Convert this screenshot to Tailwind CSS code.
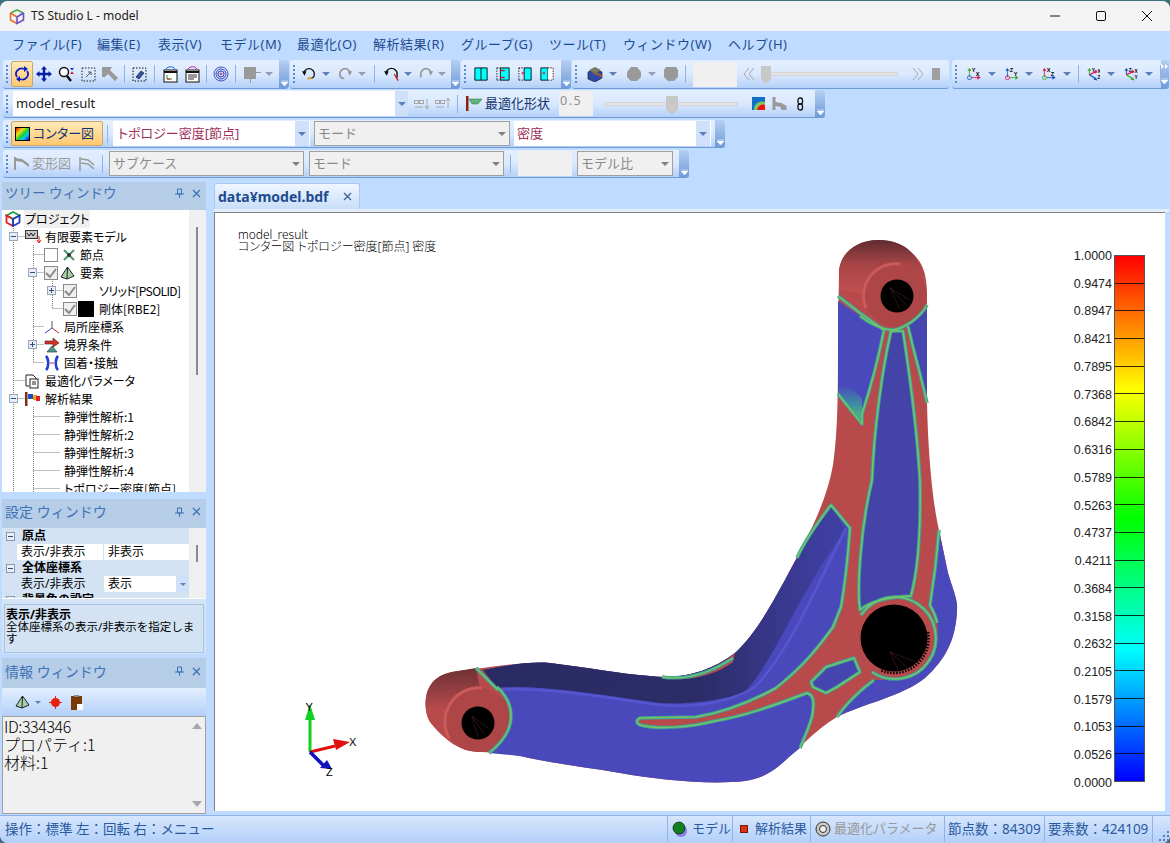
<!DOCTYPE html>
<html lang="ja">

<head>
    <meta charset="UTF-8">
    <title>TS Studio L - model</title>
    <script src="https://cdn.jsdelivr.net/npm/@tailwindcss/browser@4"></script>
</head>

<body class="bg-[#3d6f7b] overflow-hidden">
    <svg width="0" height="0" class="absolute">
        <defs>
            <symbol id="face" viewBox="0 0 16 16">
                <path d="M1 1H15V15H1z" fill="#00ffff" stroke="black" />
                <path d="M8 1V15" stroke="black" />
            </symbol>
            <linearGradient id="cap-top" x1="0" y1="0" x2="0" y2="1">
                <stop offset="0" stop-color="#5f2c30" />
                <stop offset="0.45" stop-color="#a84547" />
                <stop offset="1" stop-color="#c45053" />
            </linearGradient>
            <linearGradient id="cap-low" x1="0" y1="0" x2="0" y2="1">
                <stop offset="0" stop-color="#6d3134" />
                <stop offset="0.5" stop-color="#b84a4c" />
                <stop offset="1" stop-color="#b84a4c" />
            </linearGradient>
            <linearGradient id="flange" x1="0" y1="0" x2="1" y2="0">
                <stop offset="0" stop-color="#2a2a64" />
                <stop offset="0.6" stop-color="#2c2c68" />
                <stop offset="0.85" stop-color="#3a3a92" />
                <stop offset="1" stop-color="#4040a8" />
            </linearGradient>
            <linearGradient id="fade" x1="0" y1="0" x2="0" y2="1">
                <stop offset="0.2" stop-color="#4949bb" />
                <stop offset="0.6" stop-color="#3d8fa0" />
                <stop offset="0.9" stop-color="#58bd78" />
            </linearGradient>
            <!-- density borders, only where red meets blue -->
            <g id="edges" fill="none" stroke-linejoin="round">
                <path d="M797 558C805 540 818 522 831 505L850 528C848 555 844 590 841 607L833 627C820 645 805 665 776 688C745 705 720 713 696 717L640 718C636 720 636 723 640 725C660 730 690 727 715 721C745 716 775 705 807 693C815 695 814 705 812 717C808 730 804 738 800 748" />
                <path d="M811 682L826 667L854 658L860 672L837 687L826 693L813 687Z" />
                <path d="M837 717C845 705 860 690 874 680" />
                <path d="M937 623C936 615 932 610 930 605C934 580 937 555 939 530" />
                <path d="M891 331L903 331C909 370 917 430 920 480C921 530 918 570 911 596C890 597 872 600 860 610C857 590 860 530 872 480C874 430 882 370 891 331Z" />
                <path d="M927 403C922 380 912 345 908 326" />
                <path d="M884 330C878 360 870 390 862 414L862 424L838 394" />
                <path d="M838 296L860 313L884 330" />
                <path d="M662 677C690 681 715 670 733 658" />
                <path d="M476 668L498 690" />
                <path d="M927 305C920 318 905 328 893 330C882 330 868 322 860 316" />
                <path d="M497 687C506 695 511 705 511 716C511 730 503 742 489 753" />
                <path d="M861 615A41 41 0 1 1 872 672" />
            </g>
        </defs>
    </svg>

    <div class="flex flex-col w-[1170px] h-[842px] mt-px rounded-lg overflow-hidden bg-[#bfdbff] font-['Noto_Sans','Noto_Sans_CJK_JP',sans-serif] text-[#1e4b8f]">
        <!-- title bar -->
        <div class="flex items-center h-[30px] shrink-0 bg-[#f3f3f3] pl-[9px] text-black">
            <svg class="w-[16px] h-[17px] mr-[6px]" viewBox="0 0 16 17" fill="none">
                <path d="M1.500 5L8 2l6.500 3" stroke="#4bb04b" stroke-width="1.600" />
                <path d="M1.500 5v7L8 15.500M8 9L1.500 5" stroke="#e8722a" stroke-width="1.600" />
                <path d="M14.500 5v7L8 15.500V9l6.500-4" stroke="#6a4fc0" stroke-width="1.600" />
            </svg>
            <span class="text-[12px] text-[#222]">TS Studio L - model</span>
            <div class="ml-auto flex items-center">
                <svg class="w-[46px] h-[30px]" viewBox="0 0 46 30"><path d="M18 15H28" stroke="#111" /></svg>
                <svg class="w-[46px] h-[30px]" viewBox="0 0 46 30"><rect x="18.500" y="10.500" width="9" height="9" rx="1.500" fill="none" stroke="#111" /></svg>
                <svg class="w-[46px] h-[30px]" viewBox="0 0 46 30"><path d="M18 10L28 20M28 10L18 20" stroke="#111" /></svg>
            </div>
        </div>

        <!-- menu -->
        <div class="flex items-center h-[29px] shrink-0 pl-[12px] pb-[2px] text-[13px] tracking-[0.5px]">
            <span class="w-[85px]">ファイル(F)</span>
            <span class="w-[61px]">編集(E)</span>
            <span class="w-[62px]">表示(V)</span>
            <span class="w-[77px]">モデル(M)</span>
            <span class="w-[76px]">最適化(O)</span>
            <span class="w-[88px]">解析結果(R)</span>
            <span class="w-[88px]">グループ(G)</span>
            <span class="w-[74px]">ツール(T)</span>
            <span class="w-[105px]">ウィンドウ(W)</span>
            <span>ヘルプ(H)</span>
        </div>

        <!-- toolbar row 1 -->
        <div class="flex h-[29px] shrink-0 pl-[3px] gap-[1px]">
            <div class="flex items-center w-[286px] rounded-l-[3px] rounded-r-[4px] overflow-hidden border-b border-[#6f9ad6] bg-linear-to-b from-[#e3efff] via-[#dbe9fe] to-[#b3d0f9]">
                <div class="w-[2px] h-[18px] ml-[3px] mr-[3px] border-l-2 border-dotted border-[#5c8ad0]"></div>
                <div class="flex items-center justify-center w-[22px] h-[26px] rounded-[2px] border border-[#c9a66a] bg-linear-to-b from-[#ffe9b8] to-[#ffc870]">
                    <svg class="w-[16px] h-[16px]" viewBox="0 0 16 16" fill="none"><path d="M3 11A5.500 5.500 0 0 1 10 3M13 5A5.500 5.500 0 0 1 6 13" stroke="#0a1fc8" stroke-width="1.800" /><path d="M10 0l4 3-4 3zM6 10l-4 3 4 3z" fill="#0a1fc8" /></svg>
                </div>
                <div class="flex items-center justify-center w-[22px]">
                    <svg class="w-[16px] h-[16px]" viewBox="0 0 16 16" fill="#0a1fa8"><path d="M8 0l3 3.500H9.200v3.300h3.300V5L16 8l-3.500 3V9.200H9.200v3.300H11L8 16l-3-3.500h1.800V9.200H3.500V11L0 8l3.500-3v1.800h3.300V3.500H5z" /></svg>
                </div>
                <div class="flex items-center justify-center w-[22px]">
                    <svg class="w-[17px] h-[17px]" viewBox="0 0 17 17" fill="none"><circle cx="6" cy="6" r="4.500" stroke="#111" stroke-width="1.500" fill="white" /><path d="M9 10l4 5" stroke="#111" stroke-width="2.500" /><path d="M12 2h4l-2 2.500z" fill="#1030d0" /><path d="M12 8h4l-2-2.500z" fill="#e01030" /></svg>
                </div>
                <div class="flex items-center justify-center w-[22px]">
                    <svg class="w-[15px] h-[15px]" viewBox="0 0 15 15" fill="none"><rect x="1" y="1" width="13" height="13" stroke="#222" stroke-dasharray="1.500 1.500" /><path d="M5 10l5-5M7 5h3v3" stroke="#555" /></svg>
                </div>
                <div class="flex items-center justify-center w-[22px]">
                    <svg class="w-[17px] h-[16px]" viewBox="0 0 17 16" fill="#999"><path d="M0 1h10l-2 3 8 8-3 3-7-7-3 3H0z" /></svg>
                </div>
                <div class="w-[1px] h-[18px] mx-[3px] bg-[#8fb2e4]"></div>
                <div class="flex items-center justify-center w-[22px]">
                    <svg class="w-[15px] h-[15px]" viewBox="0 0 15 15" fill="none"><rect x="1" y="1" width="13" height="13" stroke="#111" stroke-dasharray="1.500 1.500" /><path d="M4 10l5-6 3 2-5 6z" fill="#2e55a8" stroke="#111" stroke-width=".6" /></svg>
                </div>
                <div class="w-[1px] h-[18px] mx-[4px] bg-[#8fb2e4]"></div>
                <div class="flex items-center justify-center w-[22px]">
                    <svg class="w-[15px] h-[17px]" viewBox="0 0 15 17" fill="none"><path d="M3 3C5 0 10 0 12 3" stroke="#1060e0" /><rect x="1" y="4" width="13" height="12" fill="white" stroke="#111" /><path d="M1 6h13" stroke="#111" stroke-width="2" /><path d="M4 9v4h5" stroke="#1a9020" /><path d="M4 13h3" stroke="#e01030" /></svg>
                </div>
                <div class="flex items-center justify-center w-[22px]">
                    <svg class="w-[15px] h-[17px]" viewBox="0 0 15 17" fill="none"><path d="M3 3C5 0 10 0 12 3" stroke="#d01090" /><rect x="1" y="4" width="13" height="12" fill="white" stroke="#111" /><path d="M1 6h13" stroke="#111" stroke-width="2" /><path d="M3 9h9M3 11h9M3 13h6" stroke="#333" /></svg>
                </div>
                <div class="w-[1px] h-[18px] mx-[3px] bg-[#8fb2e4]"></div>
                <div class="flex items-center justify-center w-[22px]">
                    <svg class="w-[16px] h-[16px]" viewBox="0 0 16 16" fill="none"><circle cx="8" cy="8" r="7" stroke="#3a50b8" /><circle cx="8" cy="8" r="5" fill="#c8d0f4" stroke="#3a50b8" /><circle cx="8" cy="8" r="3" stroke="#3a50b8" /><circle cx="8" cy="8" r="1" fill="#e01030" /></svg>
                </div>
                <div class="w-[1px] h-[18px] mx-[3px] bg-[#8fb2e4]"></div>
                <div class="flex items-center ml-[4px]">
                    <svg class="w-[18px] h-[17px]" viewBox="0 0 18 17" fill="#999"><path d="M1 1h12v12H1zM13 6h5v1h-5zM7 13h1v4H7z" /></svg>
                </div>
                <div class="ml-[4px] w-0 h-0 border-x-[4px] border-t-[4px] border-x-transparent border-t-[#8f9fb8]"></div>
                <div class="ml-auto flex items-end justify-center w-[10px] h-full pb-[2px] bg-linear-to-b from-[#b6cff2] to-[#6f9bd8]">
                    <svg class="w-[7px] h-[6px]" viewBox="0 0 7 6"><path d="M0 0h7M0 2h7L3.500 6z" stroke="white" fill="white" stroke-width=".6" /></svg>
                </div>
            </div>
            <div class="flex items-center w-[170px] rounded-[3px] overflow-hidden border-b border-[#6f9ad6] bg-linear-to-b from-[#e3efff] via-[#dbe9fe] to-[#b3d0f9]">
                <div class="w-[2px] h-[18px] ml-[3px] mr-[7px] border-l-2 border-dotted border-[#5c8ad0]"></div>
                <svg class="w-[16px] h-[16px]" viewBox="0 0 16 16" fill="none"><path d="M2 8A6 6 0 0 1 14 8c0 3-2 5-5 5" stroke="#111" stroke-width="1.500" /><path d="M0 5l5 0-2 5z" fill="#111" /><path d="M6 13h6" stroke="#e0a020" stroke-width="2" /></svg>
                <div class="mx-[6px] w-0 h-0 border-x-[4px] border-t-[4px] border-x-transparent border-t-[#5b7fb8]"></div>
                <svg class="w-[16px] h-[16px] ml-[2px]" viewBox="0 0 16 16" fill="none"><path d="M14 8A6 6 0 0 0 2 8c0 3 2 5 5 5" stroke="#999" stroke-width="2" /><path d="M16 5l-5 0 2 5z" fill="#999" /></svg>
                <div class="mx-[6px] w-0 h-0 border-x-[4px] border-t-[4px] border-x-transparent border-t-[#8f9fb8]"></div>
                <div class="w-[1px] h-[18px] mx-[2px] bg-[#8fb2e4]"></div>
                <svg class="w-[17px] h-[16px] ml-[7px]" viewBox="0 0 16 16" fill="none"><path d="M2 8A6 6 0 0 1 14 8v4" stroke="#111" stroke-width="1.500" /><path d="M0 5l5 0-2 5z" fill="#111" /><path d="M11 8l4 7" stroke="#d02020" stroke-width="1.500" /></svg>
                <div class="mx-[5px] w-0 h-0 border-x-[4px] border-t-[4px] border-x-transparent border-t-[#5b7fb8]"></div>
                <svg class="w-[16px] h-[16px] ml-[2px]" viewBox="0 0 16 16" fill="none"><path d="M14 8A6 6 0 0 0 2 8v4" stroke="#999" stroke-width="2" /><path d="M16 5l-5 0 2 5z" fill="#999" /></svg>
                <div class="mx-[5px] w-0 h-0 border-x-[4px] border-t-[4px] border-x-transparent border-t-[#8f9fb8]"></div>
                <div class="ml-auto flex items-end justify-center w-[10px] h-full pb-[2px] bg-linear-to-b from-[#b6cff2] to-[#6f9bd8]">
                    <svg class="w-[7px] h-[6px]" viewBox="0 0 7 6"><path d="M0 0h7M0 2h7L3.500 6z" stroke="white" fill="white" stroke-width=".6" /></svg>
                </div>
            </div>
            <div class="flex items-center w-[110px] rounded-[3px] overflow-hidden border-b border-[#6f9ad6] bg-linear-to-b from-[#e3efff] via-[#dbe9fe] to-[#b3d0f9]">
                <div class="w-[2px] h-[18px] ml-[3px] mr-[8px] border-l-2 border-dotted border-[#5c8ad0]"></div>
                <svg class="w-[14px] h-[14px]"><use href="#face" /></svg>
                <svg class="w-[14px] h-[14px] ml-[8px]" viewBox="0 0 16 16"><path d="M5 1H15V15H5z" fill="#00ffff" stroke="black" /><path d="M1 1H5M1 15H5M1 1V15" stroke="black" stroke-dasharray="1.500 1.500" /><path d="M5 4h5M5 12h5" stroke="#e01030" stroke-width="1.500" /></svg>
                <svg class="w-[14px] h-[14px] ml-[8px]" viewBox="0 0 16 16"><path d="M7 1H15V15H7z" fill="#00ffff" stroke="black" /><path d="M1 1H7M1 15H7M1 1V15" stroke="black" stroke-dasharray="1.500 1.500" /><path d="M4 7h3M5.500 5.500v3" stroke="#e01030" /></svg>
                <svg class="w-[14px] h-[14px] ml-[8px]" viewBox="0 0 16 16"><path d="M1 1H9V15H1z" fill="#00ffff" stroke="black" /><path d="M9 1H15V15H9" fill="white" stroke="black" stroke-dasharray="1.500 1.500" /><path d="M3 7h3M4.500 5.500v3" stroke="#e01030" /></svg>
                <div class="ml-auto flex items-end justify-center w-[10px] h-full pb-[2px] bg-linear-to-b from-[#b6cff2] to-[#6f9bd8]">
                    <svg class="w-[7px] h-[6px]" viewBox="0 0 7 6"><path d="M0 0h7M0 2h7L3.500 6z" stroke="white" fill="white" stroke-width=".6" /></svg>
                </div>
            </div>
            <div class="flex items-center w-[377px] rounded-[3px] overflow-hidden border-b border-[#6f9ad6] bg-linear-to-b from-[#e3efff] via-[#dbe9fe] to-[#b3d0f9]">
                <div class="w-[2px] h-[18px] ml-[3px] mr-[10px] border-l-2 border-dotted border-[#5c8ad0]"></div>
                <svg class="w-[16px] h-[16px]" viewBox="0 0 16 16"><path d="M1 6l7-3 7 3v6l-7 4-7-3z" fill="#2d4aa8" stroke="#111" stroke-width=".6" /><path d="M2 4l6-3 6 3-6 4z" fill="#7a7a5a" /><path d="M7 7l8 3" stroke="#a06030" stroke-width="2" /></svg>
                <div class="mx-[6px] w-0 h-0 border-x-[4px] border-t-[4px] border-x-transparent border-t-[#5b7fb8]"></div>
                <svg class="w-[16px] h-[16px] ml-[3px]" viewBox="0 0 16 16" fill="#999"><path d="M5 1h6l4 5v5l-4 4H5l-4-4V6z" /></svg>
                <div class="mx-[6px] w-0 h-0 border-x-[4px] border-t-[4px] border-x-transparent border-t-[#8f9fb8]"></div>
                <svg class="w-[16px] h-[16px] ml-[1px]" viewBox="0 0 16 16" fill="#999"><path d="M3 1h10l2 3v7l-4 4H5l-4-4V4z" /></svg>
                <div class="w-[1px] h-[18px] ml-[6px] bg-[#8fb2e4]"></div>
                <div class="w-[44px] h-[25px] ml-[7px] bg-[#f0f0f0]"></div>
                <svg class="w-[12px] h-[12px] ml-[6px]" viewBox="0 0 12 12" fill="none" stroke="#a8a8a8"><path d="M6 0L1 6l5 6M11 0L6 6l5 6" /></svg>
                <div class="relative w-[135px] h-[4px] ml-[8px] bg-[#e4e4e4] border border-[#d4d4d4]">
                    <div class="absolute left-[-3px] top-[-7px] w-[10px] h-[18px] bg-[#c8c8c8] [clip-path:polygon(0_0,100%_0,100%_75%,50%_100%,0_75%)]"></div>
                </div>
                <svg class="w-[12px] h-[12px] ml-[14px]" viewBox="0 0 12 12" fill="none" stroke="#a8a8a8"><path d="M1 0l5 6-5 6M6 0l5 6-5 6" /></svg>
                <div class="w-[8px] h-[12px] ml-[8px] bg-[#a0a0a0]"></div>
            </div>
            <div class="flex items-center w-[217px] ml-[2px] rounded-[3px] overflow-hidden border-b border-[#6f9ad6] bg-linear-to-b from-[#e3efff] via-[#dbe9fe] to-[#b3d0f9]">
                <div class="w-[2px] h-[18px] ml-[3px] mr-[10px] border-l-2 border-dotted border-[#5c8ad0]"></div>
                <svg class="w-[17px] h-[16px]" viewBox="0 0 17 16" font-size="7" font-weight="bold" font-family="Liberation Sans"><path d="M3 12V3" stroke="#33aa22" /><path d="M.5 4L3 .5 5.500 4z" fill="#33aa22" /><path d="M5 12.500H14" stroke="#e0104a" /><path d="M13 10l4 2.500-4 2.500z" fill="#e0104a" /><circle cx="3" cy="12.500" r="2.500" fill="none" stroke="#1050c0" /><text x="6" y="6">Y</text><text x="11" y="10">X</text></svg>
                <div class="mx-[7px] w-0 h-0 border-x-[4px] border-t-[4px] border-x-transparent border-t-[#5b7fb8]"></div>
                <svg class="w-[17px] h-[16px] ml-[2px]" viewBox="0 0 17 16" font-size="7" font-weight="bold" font-family="Liberation Sans"><path d="M3 12V3" stroke="#1050c0" /><path d="M.5 4L3 .5 5.500 4z" fill="#1050c0" /><path d="M5 12.500H14" stroke="#33aa22" /><path d="M13 10l4 2.500-4 2.500z" fill="#33aa22" /><circle cx="3" cy="12.500" r="2.500" fill="none" stroke="#e0104a" /><text x="6" y="6">Z</text><text x="11" y="10">Y</text></svg>
                <div class="mx-[7px] w-0 h-0 border-x-[4px] border-t-[4px] border-x-transparent border-t-[#5b7fb8]"></div>
                <svg class="w-[17px] h-[16px] ml-[2px]" viewBox="0 0 17 16" font-size="7" font-weight="bold" font-family="Liberation Sans"><path d="M3 12V3" stroke="#e0104a" /><path d="M.5 4L3 .5 5.500 4z" fill="#e0104a" /><path d="M5 12.500H14" stroke="#1050c0" /><path d="M13 10l4 2.500-4 2.500z" fill="#1050c0" /><circle cx="3" cy="12.500" r="2.500" fill="none" stroke="#33aa22" /><text x="6" y="6">X</text><text x="11" y="10">Z</text></svg>
                <div class="mx-[7px] w-0 h-0 border-x-[4px] border-t-[4px] border-x-transparent border-t-[#5b7fb8]"></div>
                <div class="w-[1px] h-[18px] mr-[8px] bg-[#8fb2e4]"></div>
                <svg class="w-[17px] h-[16px]" viewBox="0 0 17 16" font-size="6" font-weight="bold" font-family="Liberation Sans"><path d="M3 3V9" stroke="#33aa22" stroke-width="1.200" /><path d="M.5 4L3 .5 5.500 4z" fill="#33aa22" /><path d="M3 9L11 5" stroke="#e0104a" stroke-width="1.500" /><path d="M9 3l4 1-2 4z" fill="#e0104a" /><path d="M3 9L11 14" stroke="#1050c0" stroke-width="1.500" /><path d="M8 15l5 1-2-4z" fill="#1050c0" /><text x="6" y="5">Y</text><text x="13" y="7">X</text><text x="13" y="14">Z</text></svg>
                <div class="mx-[7px] w-0 h-0 border-x-[4px] border-t-[4px] border-x-transparent border-t-[#5b7fb8]"></div>
                <svg class="w-[17px] h-[16px] ml-[2px]" viewBox="0 0 17 16" font-size="6" font-weight="bold" font-family="Liberation Sans"><path d="M3 3V9" stroke="#1050c0" stroke-width="1.200" /><path d="M.5 4L3 .5 5.500 4z" fill="#1050c0" /><path d="M3 9L11 5" stroke="#e0104a" stroke-width="1.500" /><path d="M9 3l4 1-2 4z" fill="#e0104a" /><path d="M3 9L11 14" stroke="#33aa22" stroke-width="1.500" /><path d="M8 15l5 1-2-4z" fill="#33aa22" /><text x="6" y="5">Z</text><text x="13" y="7">X</text><text x="13" y="14">Y</text></svg>
                <div class="mx-[7px] w-0 h-0 border-x-[4px] border-t-[4px] border-x-transparent border-t-[#5b7fb8]"></div>
                <div class="w-[1px] h-[18px] bg-[#8fb2e4]"></div>
                <div class="ml-auto flex flex-col items-center justify-between w-[10px] h-full py-[4px] bg-linear-to-b from-[#b6cff2] to-[#6f9bd8]">
                    <svg class="w-[7px] h-[5px]" viewBox="0 0 7 5"><path d="M0 0l3 2.500L0 5zM4 0l3 2.500L4 5z" fill="white" /></svg>
                    <svg class="w-[7px] h-[6px]" viewBox="0 0 7 6"><path d="M0 0h7M0 2h7L3.500 6z" stroke="white" fill="white" stroke-width=".6" /></svg>
                </div>
            </div>
        </div>

        <!-- toolbar row 2 -->
        <div class="flex h-[29px] mt-[1px] shrink-0 pl-[3px]">
            <div class="flex items-center w-[822px] h-[28px] rounded-[3px] overflow-hidden border-b border-[#6f9ad6] bg-linear-to-b from-[#e3efff] via-[#dbe9fe] to-[#b3d0f9]">
                <div class="w-[2px] h-[18px] ml-[3px] mr-[5px] border-l-2 border-dotted border-[#5c8ad0]"></div>
                <div class="flex items-center w-[382px] h-[25px] pl-[3px] pt-[1px] bg-white text-[13px] text-[#222]">model_result</div>
                <div class="flex items-center justify-center w-[13px] h-[25px] bg-[#cfe0fa]">
                    <div class="w-0 h-0 border-x-[4px] border-t-[4px] border-x-transparent border-t-[#5b7fb8]"></div>
                </div>
                <svg class="w-[16px] h-[12px] ml-[6px]" viewBox="0 0 16 12" fill="none" stroke="#a8a8a8"><rect x="0.500" y="2.500" width="4" height="3" /><rect x="5.500" y="2.500" width="4" height="3" /><path d="M1 9h8M13 1v9M11 8l2 3 2-3" /></svg>
                <svg class="w-[16px] h-[12px] ml-[5px]" viewBox="0 0 16 12" fill="none" stroke="#a8a8a8"><rect x="0.500" y="2.500" width="4" height="3" /><rect x="5.500" y="2.500" width="4" height="3" /><path d="M1 9h8M13 1v9M11 3l2-3 2 3" /></svg>
                <div class="w-[1px] h-[18px] ml-[6px] bg-[#8fb2e4]"></div>
                <svg class="w-[16px] h-[15px] ml-[8px]" viewBox="0 0 16 15"><path d="M0 0h2.500v15H0z" fill="#8a2010" /><path d="M3 3h13l-4 5H6z" fill="#5cb880" stroke="#2d6a4a" stroke-width=".5" /></svg>
                <span class="ml-[3px] text-[13px] text-[#15356f]">最適化形状</span>
                <div class="flex items-start w-[34px] h-[25px] ml-[9px] pl-[1px] pt-[1px] bg-[#f0f0f0] text-[12.500px] text-[#8f8f8f] tracking-[1.500px]">0.5</div>
                <div class="relative w-[134px] h-[4px] ml-[11px] bg-[#e4e4e4] border border-[#d4d4d4]">
                    <div class="absolute left-[61px] top-[-7px] w-[12px] h-[19px] bg-[#c8c8c8] [clip-path:polygon(0_0,100%_0,100%_75%,50%_100%,0_75%)]"></div>
                </div>
                <svg class="w-[13px] h-[13px] ml-[14px]" viewBox="0 0 13 13"><rect width="13" height="13" fill="#1070c8" /><path d="M2 13a8 8 0 0 1 11-8v8z" fill="#7cc860" /><path d="M5 13a6 6 0 0 1 8-5v5z" fill="#f01010" /></svg>
                <svg class="w-[16px] h-[14px] ml-[7px]" viewBox="0 0 15 14" fill="#999"><path d="M0 0h3v5l6 1 5 3v4H9l-1-3-5-1v4H0z" /></svg>
                <svg class="w-[7px] h-[14px] ml-[9px]" viewBox="0 0 7 14" fill="none" stroke="#111" stroke-width="1.300"><rect x="1" y="1" width="4.500" height="6" rx="2" /><rect x="1" y="7" width="4.500" height="6" rx="2" /></svg>
                <div class="ml-auto flex items-end justify-center w-[10px] h-full pb-[2px] bg-linear-to-b from-[#b6cff2] to-[#6f9bd8]">
                    <svg class="w-[7px] h-[6px]" viewBox="0 0 7 6"><path d="M0 0h7M0 2h7L3.500 6z" stroke="white" fill="white" stroke-width=".6" /></svg>
                </div>
            </div>
        </div>

        <!-- toolbar row 3 -->
        <div class="flex h-[29px] mt-[1px] shrink-0 pl-[3px]">
            <div class="flex items-center w-[722px] h-[28px] rounded-[3px] overflow-hidden border-b border-[#6f9ad6] bg-linear-to-b from-[#e3efff] via-[#dbe9fe] to-[#b3d0f9]">
                <div class="w-[2px] h-[18px] ml-[3px] mr-[3px] border-l-2 border-dotted border-[#5c8ad0]"></div>
                <div class="flex items-center w-[92px] h-[25px] pl-[3px] rounded-[2px] border border-[#c9a66a] bg-linear-to-b from-[#ffe9b8] to-[#ffc870] text-[13px] text-[#15356f]">
                    <div class="w-[15px] h-[14px] mr-[3px] border border-black bg-[linear-gradient(135deg,#e01010,#f0e010_30%,#10d040_55%,#10d0e0_70%,#1010e0)]"></div>
                    <span class="[font-feature-settings:'palt']">コンター図</span>
                </div>
                <div class="w-[1px] h-[18px] ml-[4px] mr-[5px] bg-[#8fb2e4]"></div>
                <div class="flex items-center w-[182px] h-[25px] pl-[5px] bg-white text-[13px] text-[#a0305a] [font-feature-settings:'palt']">トポロジー密度[節点]</div>
                <div class="flex items-center justify-center w-[15px] h-[25px] bg-[#cfe0fa] border-r border-white">
                    <div class="w-0 h-0 border-x-[4px] border-t-[4px] border-x-transparent border-t-[#5b7fb8]"></div>
                </div>
                <div class="flex items-center justify-between w-[196px] h-[25px] ml-[4px] px-[3px] bg-[#f0f0f0] border border-[#a0a0a0] text-[13px] text-[#8a8a8a]">
                    <span>モード</span>
                    <div class="w-0 h-0 border-x-[4px] border-t-[4px] border-x-transparent border-t-[#808080]"></div>
                </div>
                <div class="flex items-center w-[182px] h-[25px] ml-[4px] pl-[3px] bg-white text-[13px] text-[#a0305a]">密度</div>
                <div class="flex items-center justify-center w-[15px] h-[25px] bg-[#cfe0fa] border-r border-white">
                    <div class="w-0 h-0 border-x-[4px] border-t-[4px] border-x-transparent border-t-[#5b7fb8]"></div>
                </div>
                <div class="ml-auto flex items-end justify-center w-[10px] h-full pb-[2px] bg-linear-to-b from-[#b6cff2] to-[#6f9bd8]">
                    <svg class="w-[7px] h-[6px]" viewBox="0 0 7 6"><path d="M0 0h7M0 2h7L3.500 6z" stroke="white" fill="white" stroke-width=".6" /></svg>
                </div>
            </div>
        </div>

        <!-- toolbar row 4 -->
        <div class="flex h-[29px] mt-[1px] shrink-0 pl-[3px]">
            <div class="flex items-center w-[686px] h-[28px] rounded-[3px] overflow-hidden border-b border-[#6f9ad6] bg-linear-to-b from-[#e3efff] via-[#dbe9fe] to-[#b3d0f9]">
                <div class="w-[2px] h-[18px] ml-[3px] mr-[6px] border-l-2 border-dotted border-[#5c8ad0]"></div>
                <svg class="w-[15px] h-[13px]" viewBox="0 0 15 13" fill="#999"><path d="M0 0h2v13H0zM2 1l6 1 7 5v3L8 5 2 4z" /></svg>
                <span class="ml-[3px] text-[13px] text-[#9a9a9a]">変形図</span>
                <svg class="w-[16px] h-[14px] ml-[8px]" viewBox="0 0 16 14" fill="none" stroke="#999" stroke-width="1.500"><path d="M1 0v14M2 2l7 1 6 5M2 6l7 1 6 5" /></svg>
                <div class="w-[1px] h-[18px] ml-[7px] bg-[#8fb2e4]"></div>
                <div class="flex items-center justify-between w-[195px] h-[25px] ml-[6px] px-[3px] bg-[#f0f0f0] border border-[#a0a0a0] text-[13px] text-[#8a8a8a]">
                    <span>サブケース</span>
                    <div class="w-0 h-0 border-x-[4px] border-t-[4px] border-x-transparent border-t-[#808080]"></div>
                </div>
                <div class="flex items-center justify-between w-[195px] h-[25px] ml-[5px] px-[3px] bg-[#f0f0f0] border border-[#a0a0a0] text-[13px] text-[#8a8a8a]">
                    <span>モード</span>
                    <div class="w-0 h-0 border-x-[4px] border-t-[4px] border-x-transparent border-t-[#808080]"></div>
                </div>
                <div class="w-[1px] h-[18px] ml-[6px] bg-[#8fb2e4]"></div>
                <div class="w-[54px] h-[25px] ml-[7px] bg-[#f0f0f0]"></div>
                <div class="flex items-center justify-between w-[96px] h-[25px] ml-[5px] px-[3px] bg-[#f0f0f0] border border-[#a0a0a0] text-[13px] text-[#8a8a8a]">
                    <span>モデル比</span>
                    <div class="w-0 h-0 border-x-[4px] border-t-[4px] border-x-transparent border-t-[#808080]"></div>
                </div>
                <div class="ml-auto flex items-end justify-center w-[10px] h-full pb-[2px] bg-linear-to-b from-[#b6cff2] to-[#6f9bd8]">
                    <svg class="w-[7px] h-[6px]" viewBox="0 0 7 6"><path d="M0 0h7M0 2h7L3.500 6z" stroke="white" fill="white" stroke-width=".6" /></svg>
                </div>
            </div>
        </div>

        <!-- main area -->
        <div class="flex h-[635px] shrink-0">
            <!-- left column -->
            <div class="flex flex-col w-[206px] shrink-0 pl-[2px]">
                <div class="flex items-center h-[28px] mt-[3px] pb-[6px] pl-[3px] pr-[5px] bg-[#b5cde6] text-[13.500px] text-[#3f72b5]">
                    <span>ツリー ウィンドウ</span>
                    <svg class="w-[9px] h-[10px] ml-auto" viewBox="0 0 9 10" fill="none" stroke="#3f72b5"><path d="M2.500 1h4v5h-4zM0 6h9M4.500 6v4" /></svg>
                    <svg class="w-[9px] h-[9px] ml-[8px]" viewBox="0 0 9 9" stroke="#3f72b5" stroke-width="1.300"><path d="M1 1l7 7M8 1L1 8" /></svg>
                </div>
                <!-- tree -->
                <div class="relative h-[282px] overflow-hidden bg-white text-[12px] text-black font-['Noto_Sans_CJK_JP',sans-serif] [font-feature-settings:'palt']">
                    <svg class="absolute left-[-2px] top-0 w-[206px] h-[282px]" viewBox="0 210 206 282" fill="none">
                        <path d="M13.500 226V492M33.500 245V362M13.500 236.500H25M33.500 254.500H44M33.500 326.500H44M33.500 344.500H44M33.500 362.500H44M52.500 281V308M52.500 290.500H63M52.500 308.500H63M33.500 272.500H44M13.500 380.500H25M13.500 398.500H25M33.500 407V492M33.500 416.500H60M33.500 434.500H60M33.500 452.500H60M33.500 470.500H60M33.500 488.500H60" stroke="#808080" stroke-dasharray="1 1" />
                        <g fill="#e8eef8" stroke="#9aa6b8">
                            <rect x="9.500" y="232.500" width="8" height="8" />
                            <rect x="28.500" y="268.500" width="8" height="8" />
                            <rect x="47.500" y="286.500" width="8" height="8" />
                            <rect x="28.500" y="340.500" width="8" height="8" />
                            <rect x="9.500" y="394.500" width="8" height="8" />
                        </g>
                        <path d="M11 236.500h5M30 272.500h5M49 290.500h5M30 344.500h5M11 398.500h5M51.500 288v5M32.500 342v5" stroke="#33507a" />
                    </svg>
                    <div class="relative flex flex-col w-[187px]">
                        <div class="flex h-[18px] items-center pl-[3px]">
                            <svg class="w-[16px] h-[16px] mr-[3px]" viewBox="0 0 16 16" fill="none" stroke-width="1.800"><path d="M1.500 4.500L8 1l6.500 3.500L8 8z" stroke="#22a040" /><path d="M1.500 4.500v7L8 15V8z" stroke="#e02020" /><path d="M14.500 4.500v7L8 15V8z" stroke="#2040c0" /></svg>
                            <span class="px-[1px] bg-[#f0f0f0]">プロジェクト</span>
                        </div>
                        <div class="flex h-[18px] items-center pl-[23px]">
                            <svg class="w-[16px] h-[14px] mr-[4px]" viewBox="0 0 16 14"><rect x="0.500" y="0.500" width="12" height="8" fill="#c8c8c8" stroke="#333" /><path d="M2 3l2 3 2-3 2 3 2-3" fill="none" stroke="#222" /><path d="M14 6v6M12 10l2 3 2-3" fill="none" stroke="#e01010" /></svg>
                            <span>有限要素モデル</span>
                        </div>
                        <div class="flex h-[18px] items-center pl-[42px]">
                            <div class="w-[14px] h-[14px] mr-[5px] border border-[#8a8a8a] bg-white"></div>
                            <svg class="w-[12px] h-[12px] mr-[5px]" viewBox="0 0 12 12"><path d="M1 1l10 10M11 1L1 11" stroke="#4a9a70" stroke-width="2" /><circle cx="6" cy="6" r="2" fill="#333" /></svg>
                            <span>節点</span>
                        </div>
                        <div class="flex h-[18px] items-center pl-[42px]">
                            <div class="flex items-center justify-center w-[14px] h-[14px] mr-[2px] border border-[#8a8a8a] bg-[#f0f0f0]">
                                <svg class="w-[12px] h-[12px]" viewBox="0 0 12 12" fill="none"><path d="M1 6l4 4 6-8" stroke="#8a8a8a" stroke-width="2" /></svg>
                            </div>
                            <svg class="w-[15px] h-[14px] mr-[5px]" viewBox="0 0 15 14"><path d="M7.500 1L1 11l6 2 7-3z" fill="#a8d0a8" stroke="#222" /><path d="M7.500 1L7 13" stroke="#222" /></svg>
                            <span>要素</span>
                        </div>
                        <div class="flex h-[18px] items-center pl-[61px]">
                            <div class="flex items-center justify-center w-[14px] h-[14px] mr-[22px] border border-[#8a8a8a] bg-[#f0f0f0]">
                                <svg class="w-[12px] h-[12px]" viewBox="0 0 12 12" fill="none"><path d="M1 6l4 4 6-8" stroke="#8a8a8a" stroke-width="2" /></svg>
                            </div>
                            <span class="tracking-[-0.6px]">ソリッド[PSOLID]</span>
                        </div>
                        <div class="flex h-[18px] items-center pl-[61px]">
                            <div class="flex items-center justify-center w-[14px] h-[14px] mr-[1px] border border-[#8a8a8a] bg-[#f0f0f0]">
                                <svg class="w-[12px] h-[12px]" viewBox="0 0 12 12" fill="none"><path d="M1 6l4 4 6-8" stroke="#8a8a8a" stroke-width="2" /></svg>
                            </div>
                            <div class="w-[16px] h-[16px] mr-[5px] bg-black"></div>
                            <span>剛体[RBE2]</span>
                        </div>
                        <div class="flex h-[18px] items-center pl-[42px]">
                            <svg class="w-[16px] h-[14px] mr-[4px]" viewBox="0 0 16 14" fill="none"><path d="M8 8V1" stroke="#555" /><path d="M8 8L1 13" stroke="#2040b0" /><path d="M8 8l7 5" stroke="#c03030" /></svg>
                            <span>局所座標系</span>
                        </div>
                        <div class="flex h-[18px] items-center pl-[42px]">
                            <svg class="w-[16px] h-[16px] mr-[4px]" viewBox="0 0 16 16"><path d="M1 4h8V1l6 5-6 4V7H1z" fill="#e03020" stroke="#222" stroke-width=".6" /><path d="M3 15l5-6 5 6z" fill="#4a9a90" stroke="#222" stroke-width=".6" /></svg>
                            <span>境界条件</span>
                        </div>
                        <div class="flex h-[18px] items-center pl-[42px]">
                            <svg class="w-[16px] h-[16px] mr-[4px]" viewBox="0 0 16 16" fill="none"><path d="M2 1c3 3 3 11 0 14" stroke="#2040d0" stroke-width="2.500" /><path d="M14 1c-3 3-3 11 0 14" stroke="#2040d0" stroke-width="2.500" /><path d="M6 8h4" stroke="#c03050" /></svg>
                            <span>固着・接触</span>
                        </div>
                        <div class="flex h-[18px] items-center pl-[23px]">
                            <svg class="w-[15px] h-[15px] mr-[5px]" viewBox="0 0 15 15" fill="none" stroke="#222"><path d="M1 1h7l3 3v3" /><path d="M1 1v11h3" /><rect x="5" y="5" width="8" height="9" fill="white" /><path d="M7 8h4M7 10h4" /></svg>
                            <span>最適化パラメータ</span>
                        </div>
                        <div class="flex h-[18px] items-center pl-[23px]">
                            <svg class="w-[16px] h-[14px] mr-[4px]" viewBox="0 0 16 14"><path d="M0 0h2.500v14H0z" fill="#7a3018" /><path d="M3 2h5v5H3z" fill="#2050c0" /><path d="M8 3h4v5H8z" fill="#f0a020" /><path d="M11 4h4v5h-4z" fill="#e02020" /></svg>
                            <span>解析結果</span>
                        </div>
                        <div class="flex h-[18px] items-center pl-[62px]">静弾性解析:1</div>
                        <div class="flex h-[18px] items-center pl-[62px]">静弾性解析:2</div>
                        <div class="flex h-[18px] items-center pl-[62px]">静弾性解析:3</div>
                        <div class="flex h-[18px] items-center pl-[62px]">静弾性解析:4</div>
                        <div class="flex h-[18px] items-center pl-[62px]">トポロジー密度[節点]</div>
                    </div>
                    <div class="absolute right-0 top-0 w-[17px] h-full bg-[#f0f0f0]">
                        <div class="absolute left-[7px] top-[17px] w-[2px] h-[148px] bg-[#8a8a8a]"></div>
                    </div>
                </div>

                <!-- settings -->
                <div class="flex items-center h-[29px] mt-[7px] pb-[4px] pl-[3px] pr-[5px] bg-[#b5cde6] text-[14px] text-[#3f72b5]">
                    <span>設定 ウィンドウ</span>
                    <svg class="w-[9px] h-[10px] ml-auto" viewBox="0 0 9 10" fill="none" stroke="#3f72b5"><path d="M2.500 1h4v5h-4zM0 6h9M4.500 6v4" /></svg>
                    <svg class="w-[9px] h-[9px] ml-[8px]" viewBox="0 0 9 9" stroke="#3f72b5" stroke-width="1.300"><path d="M1 1l7 7M8 1L1 8" /></svg>
                </div>
                <div class="relative h-[70px] overflow-hidden bg-[#d3e3f4] text-[12px] text-black">
                    <div class="flex flex-col w-[187px]">
                        <div class="flex h-[16px] items-center pl-[4px] font-bold">
                            <div class="flex items-center justify-center w-[9px] h-[9px] mr-[7px] border border-[#8a9ab0] bg-[#e8eef8]"><div class="w-[5px] h-[1px] bg-[#33507a]"></div></div>
                            <span>原点</span>
                        </div>
                        <div class="flex h-[16px] items-center ml-[15px] bg-white">
                            <span class="w-[87px] pl-[4px] border-r border-[#d3e3f4]">表示/非表示</span>
                            <span class="pl-[4px]">非表示</span>
                        </div>
                        <div class="flex h-[16px] items-center pl-[4px] font-bold">
                            <div class="flex items-center justify-center w-[9px] h-[9px] mr-[7px] border border-[#8a9ab0] bg-[#e8eef8]"><div class="w-[5px] h-[1px] bg-[#33507a]"></div></div>
                            <span>全体座標系</span>
                        </div>
                        <div class="flex h-[16px] items-center ml-[15px]">
                            <span class="w-[87px] pl-[4px]">表示/非表示</span>
                            <div class="flex items-center w-[85px] h-full pl-[4px] bg-white">
                                <span>表示</span>
                                <div class="flex items-center justify-center w-[13px] h-full ml-auto bg-[#cfe0fa]"><div class="w-0 h-0 border-x-[3px] border-t-[3px] border-x-transparent border-t-[#5b7fb8]"></div></div>
                            </div>
                        </div>
                        <div class="flex h-[16px] items-center pl-[4px] font-bold">
                            <div class="flex items-center justify-center w-[9px] h-[9px] mr-[7px] border border-[#8a9ab0] bg-[#e8eef8]"><div class="w-[5px] h-[1px] bg-[#33507a]"></div></div>
                            <span>背景色の設定</span>
                        </div>
                    </div>
                    <div class="absolute right-0 top-0 w-[17px] h-full bg-[#f0f0f0]">
                        <div class="absolute left-[7px] top-[17px] w-[2px] h-[17px] bg-[#8a8a8a]"></div>
                    </div>
                </div>
                <div class="h-[56px] p-[2px] pt-[5px] bg-[#d3e3f4] border-t border-white text-[11.500px] text-black leading-[12px]">
                    <div class="h-[49px] pl-[1px] pt-[3px] border border-[#a8c4e4]">
                        <div class="font-bold text-[12px] leading-[13px]">表示/非表示</div>
                        <div>全体座標系の表示/非表示を指定しま<br>す</div>
                    </div>
                </div>

                <!-- info -->
                <div class="flex items-center h-[30px] mt-[4px] pb-[4px] pl-[3px] pr-[5px] bg-[#b5cde6] text-[14px] text-[#3f72b5]">
                    <span>情報 ウィンドウ</span>
                    <svg class="w-[9px] h-[10px] ml-auto" viewBox="0 0 9 10" fill="none" stroke="#3f72b5"><path d="M2.500 1h4v5h-4zM0 6h9M4.500 6v4" /></svg>
                    <svg class="w-[9px] h-[9px] ml-[8px]" viewBox="0 0 9 9" stroke="#3f72b5" stroke-width="1.300"><path d="M1 1l7 7M8 1L1 8" /></svg>
                </div>
                <div class="flex items-center h-[28px] pl-[13px] bg-linear-to-b from-[#e3efff] to-[#b3d0f9]">
                    <svg class="w-[15px] h-[14px]" viewBox="0 0 15 14"><path d="M7.500 1L1 11l6 2 7-3z" fill="#a8d0a8" stroke="#222" /><path d="M7.500 1L7 13" stroke="#222" /></svg>
                    <div class="ml-[5px] w-0 h-0 border-x-[3px] border-t-[3px] border-x-transparent border-t-[#5b7fb8]"></div>
                    <svg class="w-[13px] h-[13px] ml-[8px]" viewBox="0 0 13 13" fill="#e82010"><circle cx="6.500" cy="6.500" r="4.500" /><path d="M6 0h1v13H6zM0 6h13v1H0z" /></svg>
                    <svg class="w-[12px] h-[15px] ml-[9px]" viewBox="0 0 12 15"><path d="M0 1h11v14H0z" fill="#7a3a08" /><path d="M3 0h5v2H3z" fill="#888" /><path d="M6 9h6v6H6z" fill="white" /></svg>
                </div>
                <div class="relative flex-1 overflow-hidden bg-[#f0f0f0] border border-[#a0a0a0] text-black text-[16px] leading-[18px] font-['Noto_Sans_CJK_JP',sans-serif] font-light">
                    <div class="pl-px">
                        <div class="tracking-[-0.4px]">ID:334346</div>
                        <div>プロパティ:1</div>
                        <div>材料:1</div>
                    </div>
                    <div class="absolute right-0 top-0 flex flex-col justify-between w-[17px] h-full py-[6px] items-center bg-[#f0f0f0]">
                        <div class="w-0 h-0 border-x-[5px] border-b-[6px] border-x-transparent border-b-[#a8a8a8]"></div>
                        <div class="w-0 h-0 border-x-[5px] border-t-[6px] border-x-transparent border-t-[#a8a8a8]"></div>
                    </div>
                </div>
            </div>

            <!-- document area -->
            <div class="flex flex-col flex-1 pl-[8px] pt-[4px]">
                <div class="flex items-center w-[146px] h-[26px] pl-[3px] rounded-t-[3px] border-x border-t border-[#a8c8f0] bg-linear-to-b from-[#f0f6ff] to-[#c8def8] text-[14px] font-bold text-[#1e4b8f]">
                    <span>data¥model.bdf</span>
                    <svg class="w-[9px] h-[9px] ml-[14px]" viewBox="0 0 9 9" stroke="#3a5f95" stroke-width="1.300"><path d="M1 1l7 7M8 1L1 8" /></svg>
                </div>
                <div class="h-[3px] w-[955px] bg-[#e2eefc]"></div>
                <!-- 3d view -->
                <div class="relative w-[951px] h-[599px] bg-white border-l border-t border-[#808080] overflow-hidden">
                    <div class="absolute left-[23px] top-[16px] text-[12px] leading-[12px] text-black font-light [font-feature-settings:'palt']">
                        <div>model_result</div>
                        <div>コンター図 トポロジー密度[節点] 密度</div>
                    </div>

                    <svg class="absolute left-[-1px] top-[-1px] w-[951px] h-[599px]" viewBox="214 212 951 599">
                        <!-- base body -->
                        <path d="M839 273C839 255 855 240 878 240C895 240 905 245 915 256C923 264 927 275 927 297L927 403C928 450 932 500 939 530L948 573C953 590 958 600 957 610C956 640 945 660 925 678C905 695 860 705 837 717C815 730 800 748 789 757C775 770 765 778 745 781C710 785 660 780 620 773C585 767 550 763 520 756C505 753 490 753 470 751C455 748 440 735 430 722C424 712 424 695 430 686C436 676 445 673 458 671C490 668 520 661 550 663C585 667 620 674 650 676C680 680 710 672 735 653C755 635 770 607 785 580C800 550 825 510 833 465C838 430 838 390 838 340Z" fill="#b94a4c" />
                        <!-- top boss -->
                        <path d="M839 290L839 273C839 255 855 240 878 240C895 240 905 245 915 256L925 275L880 295Z" fill="url(#cap-top)" />
                        <!-- lower boss -->
                        <path d="M480 688L476 668L458 671C445 673 436 676 430 686C424 695 424 712 430 722C440 735 455 748 470 751L480 752Z" fill="url(#cap-low)" />

                        <!-- blue areas -->
                        <g fill="#4949bb">
                            <path d="M483 670C505 666 530 661 550 663C585 667 620 674 650 676C680 680 710 672 735 653C755 635 770 607 785 580C797 558 812 530 831 505L850 528C848 555 844 590 841 607L833 627C820 645 805 665 776 688C745 705 720 713 696 717L640 718C636 720 636 723 640 725C660 730 690 727 715 721C745 716 775 705 807 693C815 695 814 705 812 717C808 730 804 738 800 748L789 757C775 770 765 778 745 781C710 785 660 780 620 773C585 767 550 763 520 756L489 753C500 747 510 735 511 715C511 702 505 692 497 685Z" />
                            <path d="M837 717C845 705 860 690 874 680C885 680 905 680 926 662C935 650 940 635 937 623C936 615 932 610 930 605C934 580 937 555 939 530L948 573C953 590 958 600 957 610C956 640 945 660 925 678C905 695 860 705 837 717Z" />
                            <path d="M838 301L860 316L884 330C878 360 870 390 862 414L838 390Z" />
                        </g>
                        <path d="M811 682L826 667L854 658L860 672L837 687L826 693L813 687Z" fill="#4545b0" />
                        <path d="M891 331L903 331C909 370 917 430 920 480C921 530 918 570 911 596C890 597 872 600 860 610C857 590 860 530 872 480C874 430 882 370 891 331Z" fill="#4343a8" />
                        <path d="M908 326L927 305L927 403C922 380 912 345 908 326Z" fill="#4545b0" />
                        <path d="M838 376L862 398L862 424L838 394Z" fill="url(#fade)" />

                        <!-- dark flange -->
                        <path d="M497 688C530 684 590 693 660 703C690 705 725 700 745 692C775 660 800 590 846 530L831 505C812 530 797 558 785 580C770 607 755 635 735 653C710 672 680 680 650 676C620 674 585 667 550 663C530 661 505 666 483 670Z" fill="url(#flange)" />
                        <path d="M497 690C540 686 600 697 660 705C700 708 730 702 755 687C790 650 815 590 846 528" stroke="#5c5cd8" stroke-width="2.500" fill="none" opacity=".7" />
                        <!-- red sliver on the underside -->
                        <path d="M660 677C690 680 715 670 735 653L733 662C715 676 685 683 660 677Z" fill="#b94a4c" />

                        <!-- top boss face and hole -->
                        <path d="M863 295A32 32 0 0 1 895 263C910 261 927 275 927 297C927 312 908 325 895 327C880 327 863 312 863 295Z" fill="#ae4648" />
                        <path d="M866 308A32 32 0 0 1 900 264" fill="none" stroke="#cc5a5c" stroke-width="3" />
                        <circle cx="897" cy="296" r="16.500" fill="black" />
                        <path d="M890 288L910 300M890 288L906 305M890 288L900 309" stroke="#b94a4c" stroke-width=".5" opacity=".5" />

                        <!-- lower boss face and hole -->
                        <path d="M444 720C444 702 460 687 480 688C498 690 511 702 511 716C511 735 497 752 480 752C460 752 444 738 444 720Z" fill="#ae4648" />
                        <path d="M449 738A34 34 0 0 1 482 688" fill="none" stroke="#cc5a5c" stroke-width="3" />
                        <circle cx="478" cy="723" r="16.500" fill="black" />
                        <path d="M472 716L488 728M472 716L484 734M472 716L478 737" stroke="#b94a4c" stroke-width=".5" opacity=".5" />

                        <!-- large hole -->
                        <circle cx="895" cy="638" r="41" fill="#b94a4c" />
                        <circle cx="894" cy="638" r="33.500" fill="black" />
                        <path d="M928 632A34.500 34.500 0 0 1 880 670" fill="none" stroke="black" stroke-width="2.500" stroke-dasharray="1.500 1.500" />
                        <path d="M890 652L908 668M890 652L898 670M890 652L916 662" stroke="#b94a4c" stroke-width=".5" opacity=".5" />

                        <!-- borders drawn twice: teal halo, then green core -->
                        <use href="#edges" stroke="#3f9f9a" stroke-width="3.500" />
                        <use href="#edges" stroke="#74c664" stroke-width="1.500" />

                        <!-- axis triad -->
                        <path d="M310 752V717" stroke="#10d020" stroke-width="3" />
                        <path d="M305 720L310 704L315 720Z" fill="#10d020" />
                        <path d="M310 752L335 746" stroke="#e01010" stroke-width="3" />
                        <path d="M333 739L350 742L336 750Z" fill="#e01010" />
                        <path d="M310 752L324 766" stroke="#1010c0" stroke-width="3.500" />
                        <path d="M320 768L332 769L327 760Z" fill="#1010c0" />
                        <text x="305.500" y="711" font-size="11" fill="black" font-family="Liberation Sans">Y</text>
                        <text x="349" y="746" font-size="11" fill="black" font-family="Liberation Sans">X</text>
                        <text x="326" y="776" font-size="11" fill="black" font-family="Liberation Sans">Z</text>
                    </svg>

                    <!-- legend -->
                    <div class="absolute left-[840px] top-[35px] flex flex-col justify-between items-end w-[57px] h-[543px] text-[12.500px] leading-[16px] text-[#222] font-['Liberation_Sans',sans-serif]">
                        <span>1.0000</span><span>0.9474</span><span>0.8947</span><span>0.8421</span><span>0.7895</span><span>0.7368</span><span>0.6842</span><span>0.6316</span><span>0.5789</span><span>0.5263</span><span>0.4737</span><span>0.4211</span><span>0.3684</span><span>0.3158</span><span>0.2632</span><span>0.2105</span><span>0.1579</span><span>0.1053</span><span>0.0526</span><span>0.0000</span>
                    </div>
                    <div class="absolute left-[899px] top-[42px] flex flex-col w-[31px] h-[527px] border border-[#555] bg-[linear-gradient(to_bottom,#ff0000,#ffff00_25.500%,#00ff00_50%,#00ffff_75%,#0000ff)]">
                        <div class="flex-1 border-b border-black/80"></div><div class="flex-1 border-b border-black/80"></div><div class="flex-1 border-b border-black/80"></div><div class="flex-1 border-b border-black/80"></div><div class="flex-1 border-b border-black/80"></div><div class="flex-1 border-b border-black/80"></div><div class="flex-1 border-b border-black/80"></div><div class="flex-1 border-b border-black/80"></div><div class="flex-1 border-b border-black/80"></div><div class="flex-1 border-b border-black/80"></div><div class="flex-1 border-b border-black/80"></div><div class="flex-1 border-b border-black/80"></div><div class="flex-1 border-b border-black/80"></div><div class="flex-1 border-b border-black/80"></div><div class="flex-1 border-b border-black/80"></div><div class="flex-1 border-b border-black/80"></div><div class="flex-1 border-b border-black/80"></div><div class="flex-1 border-b border-black/80"></div><div class="flex-1"></div>
                    </div>
                </div>
            </div>
        </div>

        <!-- status bar -->
        <div class="flex items-center h-[28px] mt-[1px] shrink-0 pl-[5px] pb-[1px] border-t border-[#8fb2e4] bg-linear-to-b from-[#d6e6fd] to-[#b3d0f9] text-[13px] text-[#2a5a9e]">
            <span class="w-[662px] text-[13.500px]">操作：標準 左：回転 右：メニュー</span>
            <div class="flex items-center w-[65px] h-full pl-[4px] border-l border-[#8fb2e4]">
                <svg class="w-[16px] h-[16px] mr-[4px]" viewBox="0 0 16 16"><circle cx="9" cy="10" r="6" fill="#8a80e0" /><circle cx="7" cy="7" r="6" fill="#108020" stroke="#111" stroke-width=".7" /></svg>
                <span>モデル</span>
            </div>
            <div class="flex items-center w-[78px] h-full pl-[7px] border-l border-[#8fb2e4]">
                <div class="w-[8px] h-[8px] mr-[7px] bg-[#e03010] border border-[#702010]"></div>
                <span>解析結果</span>
            </div>
            <div class="flex items-center w-[134px] h-full pl-[4px] border-l border-[#8fb2e4] text-[#999]">
                <svg class="w-[16px] h-[16px] mr-[3px]" viewBox="0 0 16 16" fill="none" stroke="#333"><circle cx="8" cy="8" r="7" fill="#c8c8c8" /><circle cx="8" cy="8" r="3.500" fill="#f0f0f0" /></svg>
                <span>最適化パラメータ</span>
            </div>
            <div class="flex items-center w-[100px] h-full pl-[3px] border-l border-[#8fb2e4] text-[13.500px]">節点数：84309</div>
            <div class="flex items-center w-[108px] h-full pl-[3px] border-l border-[#8fb2e4] text-[13.500px]">要素数：424109</div>
            <div class="flex flex-1 items-end justify-end h-full pb-[1px] pr-[1px] border-l border-[#8fb2e4]">
                <svg class="w-[10px] h-[10px]" viewBox="0 0 10 10" fill="#5c7fb0"><path d="M8 0h2v2H8zM4 4h2v2H4zM8 4h2v2H8zM0 8h2v2H0zM4 8h2v2H4zM8 8h2v2H8z" /></svg>
            </div>
        </div>
    </div>
</body>

</html>
